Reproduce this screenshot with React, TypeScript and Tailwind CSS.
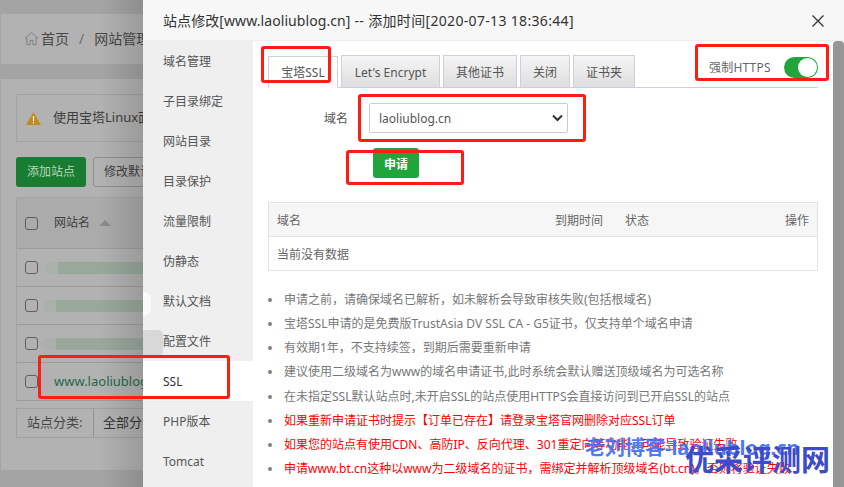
import React from "react";

const font = { fontFamily: '"Noto Sans", "Noto Sans CJK SC", sans-serif' };

const menu = ["域名管理", "子目录绑定", "网站目录", "目录保护", "流量限制", "伪静态", "默认文档", "配置文件", "SSL", "PHP版本", "Tomcat"];
const tabs = ["Let's Encrypt", "其他证书", "关闭", "证书夹"];
const tabWidths = ["w-[99px]", "w-[74px]", "w-[50px]", "w-[62px]"];
const gray = [
  "申请之前，请确保域名已解析，如未解析会导致审核失败(包括根域名)",
  "宝塔SSL申请的是免费版TrustAsia DV SSL CA - G5证书，仅支持单个域名申请",
  "有效期1年，不支持续签，到期后需要重新申请",
  "建议使用二级域名为www的域名申请证书,此时系统会默认赠送顶级域名为可选名称",
  "在未指定SSL默认站点时,未开启SSL的站点使用HTTPS会直接访问到已开启SSL的站点",
];
const red = [
  "如果重新申请证书时提示【订单已存在】请登录宝塔官网删除对应SSL订单",
  "如果您的站点有使用CDN、高防IP、反向代理、301重定向等功能，可能导致验证失败",
  "申请www.bt.cn这种以www为二级域名的证书，需绑定并解析顶级域名(bt.cn)，否则将验证失败",
];

function Check() {
  return <span className="w-[13px] h-[13px] rounded-[3px] border border-[#5f5f5f] shrink-0" />;
}

function Row({ children }: { children: React.ReactNode }) {
  return (
    <div className="h-[38px] border-b border-[#9c9c9c] flex items-center pl-[8px] gap-[16px]">
      <Check />
      {children}
    </div>
  );
}

function Blur({ offset }: { offset: number }) {
  return (
    <div className="relative h-[12px] w-[100px] shrink-0" style={{ marginLeft: offset }}>
      <div className="absolute inset-0 rounded-[5px] bg-[#aab0aa]" />
      <div className="absolute left-[13px] right-0 top-0 bottom-0 bg-[#98a99c]" />
    </div>
  );
}

function Background() {
  return (
    <div className="h-full bg-[#a4a4a4] pt-[14px] text-[#3e3e3e] text-[13px]">
      <div className="h-[50px] bg-[#b2b2b2] mx-[1px] flex items-center pl-[23px] pb-[2px] text-[14px] text-[#474747]">
        <svg width="15" height="15" viewBox="0 0 16 16" fill="none" stroke="#7d7d7d" strokeWidth="1">
          <path d="M1 8 8 1.5 15 8M3 7v7.5h3.5V10h3v4.5H13V7" />
        </svg>
        <span className="ml-[2px]">首页</span>
        <span className="mx-[10px] text-[#6d6d6d]">/</span>
        <span className="whitespace-nowrap">网站管理</span>
      </div>
      <div className="mt-[15px] bg-[#b2b2b2] mx-[1px] h-[391px] pt-[15px] pl-[15px]">
        <div className="h-[48px] border border-[#a3a3a3] flex items-center pl-[9px] gap-[12px] whitespace-nowrap">
          <svg width="15" height="13" viewBox="0 0 15 13">
            <path d="M7.5 0 15 13H0z" fill="#c08a1e" />
            <path d="M6.9 4h1.2v5H6.9zM6.9 10h1.2v1.4H6.9z" fill="#fff" />
          </svg>
          <span>使用宝塔Linux面板创建站点</span>
        </div>
        <div className="flex gap-[7px] mt-[15px] whitespace-nowrap text-[12px]">
          <div className="h-[30px] w-[70px] bg-[#187d30] rounded-[3px] text-[#b9d6bf] flex items-center justify-center">添加站点</div>
          <div className="h-[30px] w-[100px] border border-[#8f8f8f] rounded-[3px] flex items-center pl-[10px]">修改默认页</div>
        </div>
        <div className="mt-[10px] border-l border-t border-[#a3a3a3] w-[200px]">
          <div className="h-[51px] bg-[#ababab] border-b border-[#9c9c9c] flex items-center pl-[8px] gap-[16px] text-[12px]">
            <Check />
            <span className="flex items-center gap-[9px]">
              网站名
              <span className="w-0 h-0 border-x-[6px] border-x-transparent border-b-[6px] border-b-[#8b8b8b]" />
            </span>
          </div>
          <Row><Blur offset={-9} /></Row>
          <Row><Blur offset={-11} /></Row>
          <Row><Blur offset={-11} /></Row>
          <Row><span className="text-[#22694a] whitespace-nowrap">www.laoliublog.cn</span></Row>
        </div>
        <div className="mt-[7px] flex h-[30px] w-[200px] border border-[#a0a0a0] whitespace-nowrap">
          <span className="w-[77px] border-r border-[#929292] flex items-center pl-[10px] text-[#474747]">站点分类:</span>
          <span className="flex items-center pl-[9px] text-[#333]">全部分类</span>
        </div>
      </div>
    </div>
  );
}

export default function App() {
  return (
    <div className="relative w-[844px] h-[487px] overflow-hidden" style={font}>
      <Background />
      <div className="absolute left-[100px] top-0 bottom-0 w-[43px] bg-gradient-to-r from-transparent to-[#00000022]" />

      {/* modal */}
      <div className="absolute left-[143px] top-0 w-[701px] h-[487px] bg-white flex flex-col">
        <div className="h-[41px] shrink-0 bg-[#f7f7f7] border-b border-[#eeeeee] flex items-center pl-[20px] text-[14px] text-[#333] whitespace-nowrap relative">
          <span className="tracking-[0.08px]">站点修改[www.laoliublog.cn]</span>
          <span className="ml-[4px] tracking-[0.33px]">-- 添加时间[2020-07-13 18:36:44]</span>
          <svg className="absolute left-[669px] top-[15px]" width="12" height="12" viewBox="0 0 12 12" stroke="#33333a" strokeWidth="1.3">
            <path d="M.5.5l11 11M11.5.5l-11 11" />
          </svg>
        </div>
        <div className="flex flex-1 min-h-0">
          <div className="w-[110px] shrink-0 bg-[#efefef] text-[12px] text-[#555] relative">
            <div className="absolute left-0 top-[251px] w-[8px] h-[24px] rounded-r-full bg-[#fafafa]" />
            <div className="absolute left-0 top-[289px] w-[20px] h-[26px] rounded-r-[5px] bg-[#d8d8d8]" />
            {menu.map((m) => (
              <div key={m} className={`relative h-[40px] flex items-center pl-[20px] pt-[2px] ${m === "SSL" ? "bg-white text-[#333]" : ""}`}>{m}</div>
            ))}
          </div>
          <div className="flex-1 min-w-0 pl-[15px] pr-[16px] pt-[15px] relative">
            <div className="flex items-end h-[32px] border-b border-[#cfcfdb] text-[12px] text-[#555] w-[550px]">
              <div className="h-[32px] w-[70px] bg-white border border-[#cfcfdb] border-b-white -mb-px flex items-center justify-center pt-[2px]">宝塔SSL</div>
              {tabs.map((t, i) => (
                <div key={t} className={`h-[32px] ml-[3px] border border-[#cfcfdb] border-b-0 bg-gradient-to-b from-[#f5f5f5] to-[#dedede] flex items-center justify-center pt-[2px] ${tabWidths[i]}`}>{t}</div>
              ))}
            </div>
            <div className="absolute left-[456px] top-[16px] flex items-center text-[12px] text-[#666]">
              <span className="whitespace-nowrap tracking-[0.2px]">强制HTTPS</span>
              <span className="ml-[13px] w-[34px] h-[21px] rounded-full bg-[#20a53a] relative block">
                <span className="absolute right-[1px] top-[1px] w-[19px] h-[19px] rounded-full bg-white" />
              </span>
            </div>
            <div className="flex items-center mt-[15px] text-[12px] text-[#555]">
              <span className="w-[80px] text-right pt-[2px]">域名</span>
              <div className="ml-[21px] w-[199px] h-[30px] border border-[#cccccc] rounded-[2px] flex items-center justify-between pl-[9px] pr-[4px] text-[12px] text-[#555]">
                <span className="pt-[1px]">laoliublog.cn</span>
                <svg width="11" height="8" viewBox="0 0 11 8" fill="none" stroke="#333" strokeWidth="2"><path d="M1 1.5l4.5 4.5L10 1.5" /></svg>
              </div>
            </div>
            <div className="ml-[105px] mt-[15px] w-[46px] h-[30px] rounded-[3px] bg-[#20a53a] text-white text-[12px] font-bold flex items-center justify-center pt-[3px]">申请</div>
            <div className="mt-[24px] border border-[#e3e3e3] w-[550px] text-[12px] text-[#666]">
              <div className="h-[34px] bg-[#f6f6f6] border-b border-[#e3e3e3] flex items-center relative px-[8px] pt-[2px]">
                <span>域名</span>
                <span className="absolute left-[286px]">到期时间</span>
                <span className="absolute left-[356px]">状态</span>
                <span className="absolute right-[8px]">操作</span>
              </div>
              <div className="h-[33px] flex items-center px-[8px] pt-[2px]">当前没有数据</div>
            </div>
            <ul className="mt-[17px] text-[12px] text-[#777] whitespace-nowrap">
              {gray.map((t) => (
                <li key={t} className="flex items-center h-[24.15px]">
                  <span className="w-[4px] h-[4px] rounded-full bg-[#808080] mr-[12px] shrink-0" />
                  {t}
                </li>
              ))}
              {red.map((t) => (
                <li key={t} className="flex items-center h-[24.15px] text-[#ff0000]">
                  <span className="w-[4px] h-[4px] rounded-full bg-[#808080] mr-[12px] shrink-0" />
                  {t}
                </li>
              ))}
            </ul>
          </div>
          <div className="w-[11px] bg-[#969696] rounded-t-[4px] absolute right-0 top-[41px] bottom-0" />
        </div>
      </div>

      {/* annotation frames */}
      <div className="absolute left-[261px] top-[46px] w-[70px] h-[37px] border-[3px] border-[#ff1c10] rounded-[3px]" />
      <div className="absolute left-[358px] top-[94px] w-[228px] h-[48px] border-[3px] border-[#ff1c10] rounded-[3px]" />
      <div className="absolute left-[346px] top-[150px] w-[118px] h-[35px] border-[3px] border-[#ff1c10] rounded-[3px]" />
      <div className="absolute left-[695px] top-[44px] w-[134px] h-[37px] border-[3px] border-[#ff1c10] rounded-[3px]" />
      <div className="absolute left-[38px] top-[355px] w-[192px] h-[44px] border-[3px] border-[#ff1c10] rounded-[3px]" />

      {/* watermark */}
      <div className="absolute left-[585px] top-[433px] text-[20px] leading-[30px] font-bold text-[#3f6cf0] whitespace-nowrap opacity-90">老刘博客-laoliublog.cn</div>
      <div className="absolute left-[685px] top-[442px] text-[29px] leading-[36px] font-bold text-[#3d4bc8] whitespace-nowrap">优采评测网</div>
    </div>
  );
}
